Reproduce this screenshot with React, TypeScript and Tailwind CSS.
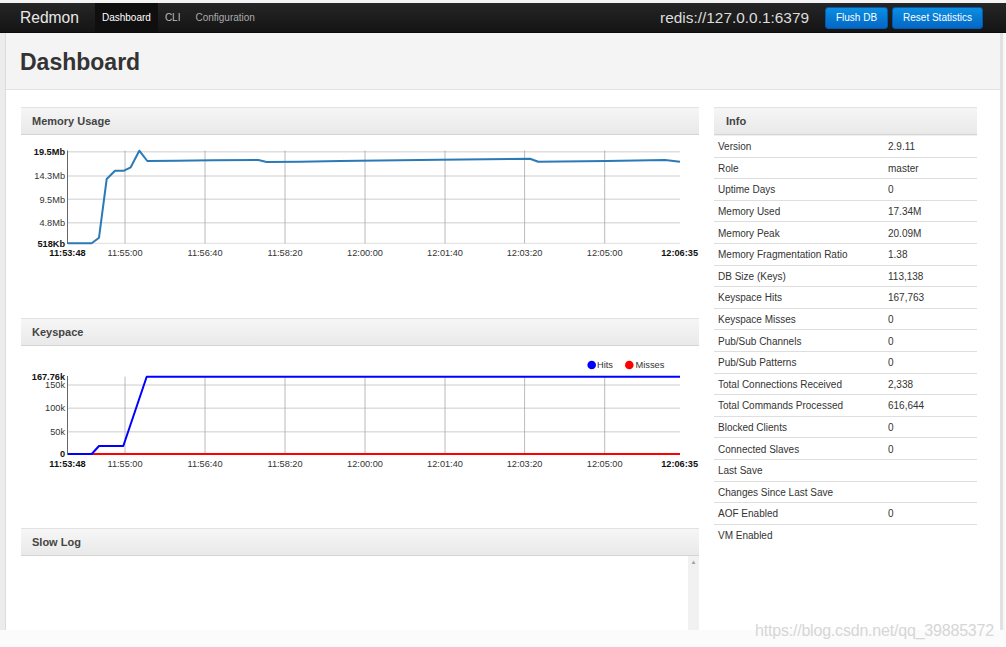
import React from "react";

const memPts: [number, number][] = [
  [68, 243.3], [91.7, 243.3], [99, 237.7], [106.7, 179], [115, 170.7], [124, 170.7],
  [130.7, 167.3], [139.3, 150.7], [147.3, 161], [176.7, 160.7], [213, 160.3], [258.3, 160],
  [266.7, 162], [300, 161.7], [340, 161], [440, 159.7], [530, 158.7], [538.3, 161.7],
  [606.7, 161], [665, 160], [680, 161.7],
];

const hitsPts: [number, number][] = [
  [68, 454], [91.7, 454], [99, 446], [123.3, 446], [146.7, 376.7], [680, 376.7],
];

const xTicks = [
  { x: 125, t: "11:55:00" },
  { x: 205, t: "11:56:40" },
  { x: 285, t: "11:58:20" },
  { x: 365, t: "12:00:00" },
  { x: 445, t: "12:01:40" },
  { x: 524.6, t: "12:03:20" },
  { x: 604.7, t: "12:05:00" },
];

const info: [string, string][] = [
  ["Version", "2.9.11"],
  ["Role", "master"],
  ["Uptime Days", "0"],
  ["Memory Used", "17.34M"],
  ["Memory Peak", "20.09M"],
  ["Memory Fragmentation Ratio", "1.38"],
  ["DB Size (Keys)", "113,138"],
  ["Keyspace Hits", "167,763"],
  ["Keyspace Misses", "0"],
  ["Pub/Sub Channels", "0"],
  ["Pub/Sub Patterns", "0"],
  ["Total Connections Received", "2,338"],
  ["Total Commands Processed", "616,644"],
  ["Blocked Clients", "0"],
  ["Connected Slaves", "0"],
  ["Last Save", ""],
  ["Changes Since Last Save", ""],
  ["AOF Enabled", "0"],
  ["VM Enabled", ""],
];

function PanelHeader({ title }: { title: string }) {
  return (
    <div className="h-[28px] flex items-center px-[11px] bg-gradient-to-b from-[#f6f6f6] to-[#e9e9e9] border-t border-[#e2e2e2] border-b border-b-[#d4d4d4] text-[11px] font-bold text-[#444]">
      {title}
    </div>
  );
}

function XLabels({ y }: { y: number }) {
  return (
    <g fontSize="9.2" fill="#333">
      <text x={67.5} y={y} textAnchor="middle" fontWeight="bold" fill="#111">11:53:48</text>
      {xTicks.map((t) => (
        <text key={t.t} x={t.x} y={y} textAnchor="middle">{t.t}</text>
      ))}
      <text x={698} y={y} textAnchor="end" fontWeight="bold" fill="#111">12:06:35</text>
    </g>
  );
}

function MemoryChart() {
  const d = memPts.map((p, i) => `${i ? "L" : "M"}${p[0]},${p[1]}`).join(" ");
  return (
    <svg width={678} height={165} viewBox="21 135 678 165" className="block">
      {[151.7, 176, 199.3, 222.7].map((y) => (
        <line key={y} x1={67.5} x2={680} y1={y} y2={y} stroke="#dedede" strokeWidth={1.5} />
      ))}
      <line x1={67.5} x2={680} y1={243.3} y2={243.3} stroke="#dedede" strokeWidth={1} />
      {xTicks.map((t) => (
        <line key={t.x} x1={t.x} x2={t.x} y1={150.5} y2={243.3} stroke="#a8a8a8" strokeWidth={0.8} />
      ))}
      <line x1={67.5} x2={67.5} y1={150.5} y2={244} stroke="#666" strokeWidth={1} />
      <path d={d} fill="none" stroke="#2a7ab8" strokeWidth={2} strokeLinejoin="round" />
      <g fontSize="9.2" fill="#333" textAnchor="end">
        <text x={65} y={154.7} fontWeight="bold" fill="#111">19.5Mb</text>
        <text x={65} y={179.2}>14.3Mb</text>
        <text x={65} y={202.5}>9.5Mb</text>
        <text x={65} y={225.9}>4.8Mb</text>
        <text x={65} y={246.5} fontWeight="bold" fill="#111">518Kb</text>
      </g>
      <XLabels y={256} />
    </svg>
  );
}

function KeyspaceChart() {
  const d = hitsPts.map((p, i) => `${i ? "L" : "M"}${p[0]},${p[1]}`).join(" ");
  return (
    <svg width={678} height={164} viewBox="21 346 678 164" className="block">
      {[385, 408.3, 431.7].map((y) => (
        <line key={y} x1={67.5} x2={680} y1={y} y2={y} stroke="#dedede" strokeWidth={1.5} />
      ))}
      {xTicks.map((t) => (
        <line key={t.x} x1={t.x} x2={t.x} y1={376.7} y2={454} stroke="#a8a8a8" strokeWidth={0.8} />
      ))}
      <line x1={67.5} x2={67.5} y1={376} y2={455} stroke="#666" strokeWidth={1} />
      <line x1={68} x2={680} y1={454} y2={454} stroke="#ff0000" strokeWidth={2} />
      <path d={d} fill="none" stroke="#0000ff" strokeWidth={2} strokeLinejoin="round" />
      <g fontSize="9.2" fill="#333" textAnchor="end">
        <text x={65} y={379.7} fontWeight="bold" fill="#111">167.76k</text>
        <text x={65} y={387.8}>150k</text>
        <text x={65} y={411.3}>100k</text>
        <text x={65} y={434.5}>50k</text>
        <text x={65} y={457.3} fontWeight="bold" fill="#111">0</text>
      </g>
      <circle cx={591.7} cy={365} r={4.3} fill="#0000ff" />
      <text x={597} y={368.2} fontSize="9.3" fill="#333">Hits</text>
      <circle cx={629.3} cy={365} r={4.3} fill="#ff0000" />
      <text x={635.5} y={368.2} fontSize="9.3" fill="#333">Misses</text>
      <XLabels y={466.5} />
    </svg>
  );
}

export default function App() {
  return (
    <div className="relative w-[1006px] h-[647px] overflow-hidden bg-white font-['Liberation_Sans',Arial,sans-serif] text-[#333]">
      <div className="h-[3px] bg-[#f4f4f4]" />
      {/* Navbar */}
      <div className="h-[30px] flex items-center bg-gradient-to-b from-[#262626] to-[#141414] border-b border-[#0c0c0c]">
        <div className="pl-[20px] pr-[16px] text-[15.6px] text-[#e8e8e8]">Redmon</div>
        <div className="h-full flex items-center px-[7px] bg-[#0f0f0f] text-[10px] text-white">Dashboard</div>
        <div className="h-full flex items-center pl-[7px] text-[10px] text-[#bdbdbd]">CLI</div>
        <div className="h-full flex items-center pl-[15px] text-[10px] text-[#aaaaaa]">Configuration</div>
        <div className="flex-1" />
        <div className="text-[15.4px] text-[#dddddd] mr-[16px]">redis://127.0.0.1:6379</div>
        <button className="h-[22px] w-[63px] rounded-[3px] border border-[#0458ab] bg-gradient-to-b from-[#0c8fe2] to-[#0567c6] text-[10px] text-white flex items-center justify-center">
          Flush DB
        </button>
        <button className="ml-[4px] h-[22px] w-[91px] rounded-[3px] border border-[#0458ab] bg-gradient-to-b from-[#0c8fe2] to-[#0567c6] text-[10px] text-white flex items-center justify-center">
          Reset Statistics
        </button>
        <div className="w-[23px]" />
      </div>

      {/* Main area */}
      <div className="h-[597px] flex">
        <div className="w-[5px] bg-[#ececec] border-r border-[#dcdcdc] box-content" />
        <div className="w-[994px] flex flex-col">
          <div className="h-[57px] shrink-0 flex items-center pl-[14px] pt-[2px] bg-[#f4f4f4] border-b border-[#e2e2e2] text-[23px] font-bold text-[#333]">
            Dashboard
          </div>
          <div className="flex-1 flex pt-[17px] pl-[15px] gap-[15px] overflow-hidden">
            {/* Left column */}
            <div className="w-[678px] flex flex-col gap-[18px]">
              <div>
                <PanelHeader title="Memory Usage" />
                <MemoryChart />
              </div>
              <div>
                <PanelHeader title="Keyspace" />
                <KeyspaceChart />
              </div>
              <div className="flex-1 flex flex-col">
                <PanelHeader title="Slow Log" />
                <div className="flex-1 flex justify-end">
                  <div className="w-[11px] bg-[#f1f1f1] flex justify-center pt-[3px]">
                    <span className="text-[6px] leading-none text-[#a0a0a0]">▲</span>
                  </div>
                </div>
              </div>
            </div>
            {/* Right column */}
            <div className="w-[263px]">
              <div className="h-[28px] flex items-center px-[12px] bg-gradient-to-b from-[#f6f6f6] to-[#e9e9e9] border-t border-[#e2e2e2] border-b border-b-[#d4d4d4] text-[11px] font-bold text-[#444]">
                Info
              </div>
              {info.map(([k, v], i) => (
                <div
                  key={k}
                  className={`h-[21.6px] grid grid-cols-[170px_1fr] items-center pt-[1px] text-[10px] text-[#333] ${i ? "border-t border-[#dedede]" : "border-t border-[#f0f0f0]"}`}
                >
                  <div className="pl-[4px]">{k}</div>
                  <div className="pl-[4px]">{v}</div>
                </div>
              ))}
            </div>
          </div>
        </div>
        <div className="w-[3px] bg-[#e1e1e1]" />
        <div className="w-[2px] bg-[#f7f7f7]" />
      </div>
      <div className="h-[17px] bg-[#fbfbfb]" />

      <div className="absolute left-[755px] top-[619px] text-[16px] text-[#d6d6d6] tracking-[-0.2px]">
        https://blog.csdn.net/qq_39885372
      </div>
    </div>
  );
}
